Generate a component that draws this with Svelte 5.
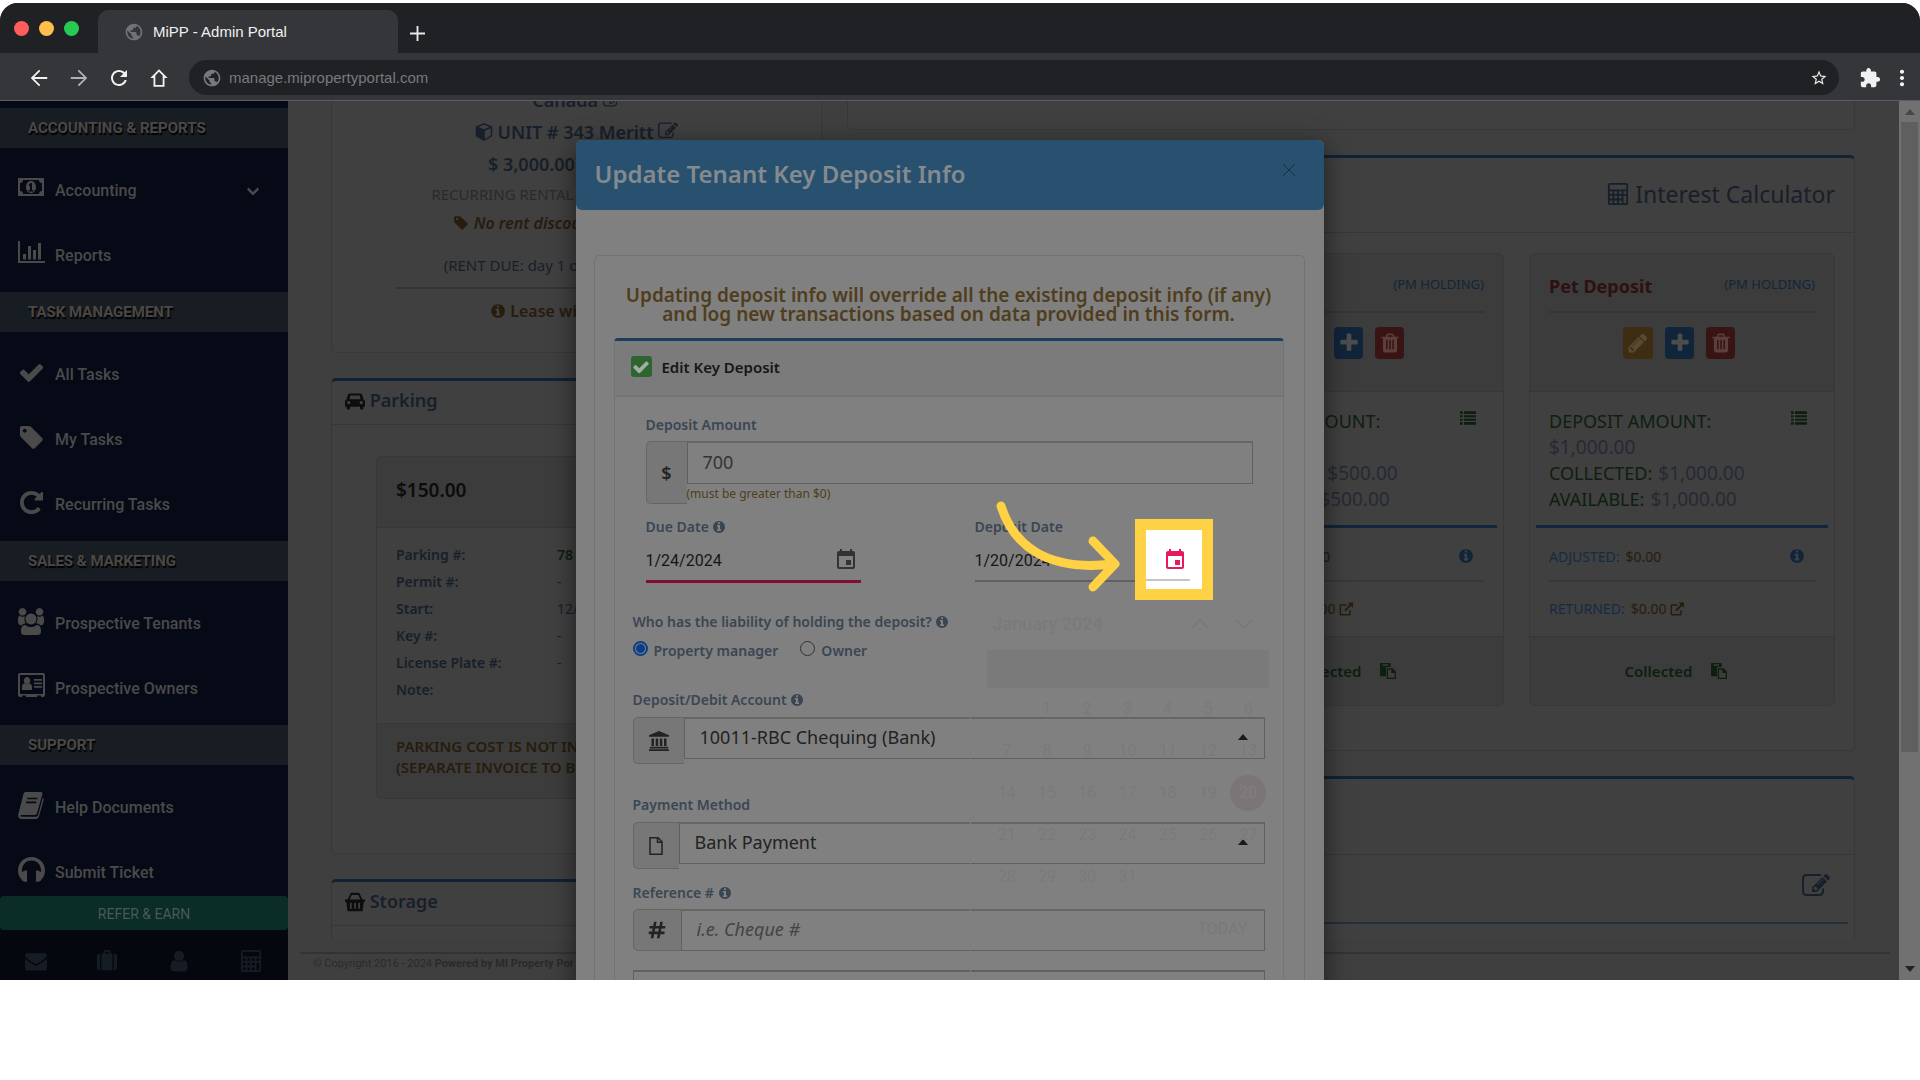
<script>
  const fa = {
    info: 'M1152 1376v-160q0-14-9-23t-23-9h-96v-512q0-14-9-23t-23-9h-320q-14 0-23 9t-9 23v160q0 14 9 23t23 9h96v320h-96q-14 0-23 9t-9 23v160q0 14 9 23t23 9h448q14 0 23-9t9-23zm-128-896v-160q0-14-9-23t-23-9h-192q-14 0-23 9t-9 23v160q0 14 9 23t23 9h192q14 0 23-9t9-23zm640 416q0 209-103 385.5t-279.5 279.5-385.5 103-385.5-103-279.5-279.5-103-385.5 103-385.5 279.5-279.5 385.5-103 385.5 103 279.5 279.5 103 385.5z',
    plus: 'M1600 736v192q0 40-28 68t-68 28h-416v416q0 40-28 68t-68 28h-192q-40 0-68-28t-28-68v-416h-416q-40 0-68-28t-28-68v-192q0-40 28-68t68-28h416v-416q0-40 28-68t68-28h192q40 0 68 28t28 68v416h416q40 0 68 28t28 68z',
    check: 'M1671 566q0 40-28 68l-724 724-136 136q-28 28-68 28t-68-28l-136-136-362-362q-28-28-28-68t28-68l136-136q28-28 68-28t68 28l294 295 656-657q28-28 68-28t68 28l136 136q28 28 28 68z',
    user: 'M1536 1399q0 109-62.5 187t-150.5 78h-854q-88 0-150.5-78t-62.5-187q0-85 8.5-160.5t31.5-152 58.5-131 94-89 134.5-34.5q131 128 313 128t313-128q76 0 134.5 34.5t94 89 58.5 131 31.5 152 8.5 160.5zm-256-887q0 159-112.5 271.5t-271.5 112.5-271.5-112.5-112.5-271.5 112.5-271.5 271.5-112.5 271.5 112.5 112.5 271.5z',
    repeat: 'M1664 256v448q0 26-19 45t-45 19h-448q-42 0-59-40-17-39 14-69l138-138q-148-137-349-137-104 0-198.5 40.5t-163.5 109.5-109.5 163.5-40.5 198.5 40.5 198.5 109.5 163.5 163.5 109.5 198.5 40.5q119 0 225-52t179-147q7-10 23-12 15 0 25 9l137 138q9 8 9.5 20.5t-7.5 22.5q-109 132-264 204.5t-327 72.5q-156 0-298-61t-245-164-164-245-61-298 61-298 164-245 245-164 298-61q147 0 284.5 55.5t244.5 156.5l130-129q29-31 70-14 39 17 39 59z',
    edit: 'M888 1184l116-116-152-152-116 116v56h96v96h56zm440-720q-16-16-33 1l-350 350q-17 17-1 33t33-1l350-350q17-17 1-33zm80 594v190q0 119-84.5 203.5t-203.5 84.5h-832q-119 0-203.5-84.5t-84.5-203.5v-832q0-119 84.5-203.5t203.5-84.5h832q63 0 117 25 15 7 18 23 3 17-9 29l-49 49q-14 14-32 8-23-6-45-6h-832q-66 0-113 47t-47 113v832q0 66 47 113t113 47h832q66 0 113-47t47-113v-126q0-13 9-22l64-64q15-15 35-7t20 29zm-96-738l288 288-672 672h-288v-288zm444 132l-92 92-288-288 92-92q28-28 68-28t68 28l152 152q28 28 28 68t-28 68z',
    mail: 'M1792 710v794q0 66-47 113t-113 47h-1472q-66 0-113-47t-47-113v-794q44 49 101 87 362 246 497 345 57 42 92.5 65.5t94.5 48 110 24.5h2q51 0 110-24.5t94.5-48 92.5-65.5q170-123 498-345 57-39 100-87zm0-294q0 79-49 151t-122 123q-376 261-468 325-10 7-42.5 31t-54 38.5-52 32.5-57.5 27-50 9h-2q-23 0-50-9t-57.5-27-52-32.5-54-38.5-42.5-31q-91-64-262-182.5t-205-142.5q-62-42-117-115.5t-55-136.5q0-78 41.5-130t118.5-52h1472q65 0 112.5 47t47.5 113z',
    tag: 'M576 448q0-53-37.5-90.5t-90.5-37.5-90.5 37.5-37.5 90.5 37.5 90.5 90.5 37.5 90.5-37.5 37.5-90.5zm1067 576q0 53-37 90l-491 492q-39 37-91 37-53 0-90-37l-715-716q-38-37-64.5-101t-26.5-117v-416q0-52 38-90t90-38h416q53 0 117 26.5t102 64.5l715 714q37 39 37 91z',
    trash: 'M704 1376v-704q0-14-9-23t-23-9h-64q-14 0-23 9t-9 23v704q0 14 9 23t23 9h64q14 0 23-9t9-23zm256 0v-704q0-14-9-23t-23-9h-64q-14 0-23 9t-9 23v704q0 14 9 23t23 9h64q14 0 23-9t9-23zm256 0v-704q0-14-9-23t-23-9h-64q-14 0-23 9t-9 23v704q0 14 9 23t23 9h64q14 0 23-9t9-23zm-544-992h448l-48-117q-7-9-17-11h-317q-10 2-17 11zm928 32v64q0 14-9 23t-23 9h-96v948q0 83-47 143.5t-113 60.5h-832q-66 0-113-58.5t-47-141.5v-952h-96q-14 0-23-9t-9-23v-64q0-14 9-23t23-9h309l70-167q15-37 54-63t79-26h320q40 0 79 26t54 63l70 167h309q14 0 23 9t9 23z',
    pencil: 'M491 1536l91-91-235-235-91 91v107h128v128h107zm523-928q0-22-22-22-10 0-17 7l-542 542q-7 7-7 17 0 22 22 22 10 0 17-7l542-542q7-7 7-17zm-54-192l416 416-832 832h-416v-416zm683 96q0 53-37 90l-166 166-416-416 166-165q36-38 90-38 53 0 91 38l235 234q37 39 37 91z'
  };
  const mi = {
    event: 'M17 12h-5v5h5v-5zM16 1v2H8V1H6v2H5c-1.11 0-1.99.9-1.99 2L3 19c0 1.1.89 2 2 2h14c1.1 0 2-.9 2-2V5c0-1.1-.9-2-2-2h-1V1h-2zm3 18H5V8h14v11z',
    puzzle: 'M20.5 11H19V7c0-1.1-.9-2-2-2h-4V3.5C13 2.12 11.88 1 10.5 1S8 2.12 8 3.5V5H4c-1.1 0-1.99.9-1.99 2v3.8H3.5c1.49 0 2.7 1.21 2.7 2.7s-1.21 2.7-2.7 2.7H2V20c0 1.1.9 2 2 2h3.8v-1.5c0-1.49 1.21-2.7 2.7-2.7 1.49 0 2.7 1.21 2.7 2.7V22H17c1.1 0 2-.9 2-2v-4h1.5c1.38 0 2.5-1.12 2.5-2.5S21.88 11 20.5 11z',
    reload: 'M17.65 6.35C16.2 4.9 14.21 4 12 4c-4.42 0-7.99 3.58-7.99 8s3.57 8 7.99 8c3.73 0 6.84-2.55 7.73-6h-2.08c-.82 2.33-3.04 4-5.65 4-3.31 0-6-2.69-6-6s2.69-6 6-6c1.66 0 3.14.69 4.22 1.78L13 11h7V4l-2.35 2.35z',
    back: 'M21 11H6.83l6.59-6.59L12 3l-9 9 9 9 1.41-1.41L6.83 13H21v-2z',
    forward: 'M3 11h14.17l-6.59-6.59L12 3l9 9-9 9-1.41-1.41L17.17 13H3v-2z',
    star: 'M22 9.24l-7.19-.62L12 2 9.19 8.63 2 9.24l5.46 4.73L5.82 21 12 17.27 18.18 21l-1.63-7.03L22 9.24zM12 15.4l-3.76 2.27 1-4.28-3.32-2.88 4.38-.38L12 6.1l1.71 4.04 4.38.38-3.32 2.88 1 4.28L12 15.4z',
    globe: 'M12 2C6.48 2 2 6.48 2 12s4.48 10 10 10 10-4.48 10-10S17.52 2 12 2zm-1 17.93c-3.95-.49-7-3.85-7-7.93 0-.62.08-1.21.21-1.79L9 15v1c0 1.1.9 2 2 2v1.93zm6.9-2.54c-.26-.81-1-1.39-1.9-1.39h-1v-3c0-.55-.45-1-1-1H8v-2h2c.55 0 1-.45 1-1V7h2c1.1 0 2-.9 2-2v-.41c2.93 1.19 5 4.06 5 7.41 0 2.08-.8 3.97-2.1 5.39z',
    home: 'M12 2.5L2.5 12H6v9.5h12V12h3.500L12 2.500zM12 5.300l4 4V19.500H8V9.300z',
    dots: 'M12 2a2.500 2.500 0 1 0 .01 0zM12 9.500a2.500 2.500 0 1 0 .01 0zM12 17a2.500 2.500 0 1 0 .01 0z',
    money: 'M0 3h26v18H0zM2 8v8a3 3 0 0 1 3 3h16a3 3 0 0 1 3-3V8a3 3 0 0 1-3-3H5a3 3 0 0 1-3 3zM13 6c3 0 5 2.700 5 6s-2 6-5 6-5-2.700-5-6 2-6 5-6zm-2 3.500v1.500h1v4h-1.500v1.500h5V15H14V8h-1.500z',
    chart: 'M0 1h2v20h25v2H0zM5 14h3v5.500H5zM10 6h3v13.500h-3zM15 10h3v9.500h-3zM20 3h3v16.500h-3z',
    group: 'M13 5.500a5.500 5.500 0 1 0 .01 0zM4.500 0a3.800 3.800 0 1 0 .01 0zM21.500 0a3.800 3.800 0 1 0 .01 0zM7 17c1.200 0 2 2 6 2s4.800-2 6-2c3 0 4 3 4 6 0 3-1 4-3.500 4h-13C4 27 3 26 3 23c0-3 1-6 4-6zM1.500 7.500C3 9 5 9 7 8.300c-1 3-.6 5 1 7-2 0-3.500 1-4.300 2C1 17.500 0 16 0 13c0-2 .2-5 1.500-5.500zM24.500 7.500C23 9 21 9 19 8.300c1 3 .6 5-1 7 2 0 3.500 1 4.300 2 2.700.2 3.700-1.300 3.700-4.300 0-2-.2-5-1.500-5.500z',
    idcard: 'M2 0h23a2 2 0 0 1 2 2v20a2 2 0 0 1-2 2h-2v-1.500h-4V24H8v-1.500H4V24H2a2 2 0 0 1-2-2V2a2 2 0 0 1 2-2zm0 2v19h23V2zM9 4a3.200 3.700 0 1 0 .01 0zM4 17v-2.500c0-2.500 1-4 2.500-4 1.500 1.500 3.500 1.500 5 0 1.500 0 2.500 1.500 2.500 4V17zM16 6h8v1.800h-8zM16 9.500h8v1.800h-8zM16 13h8v1.800h-8z',
    book: 'M7 0h13c1.500 0 2 1 1.600 2.300L17 18.500c-.5 1.500-1 2-2.500 2H3c-1 0-1 1.500 0 1.500h12.500c1.500 0 2-.5 2.500-2L22 5c1 .6 1 1.500.7 2.500L18.500 22c-.5 1.500-1.500 2-3 2H3c-2 0-3.500-2-2.700-4.500L4.500 3C5 1 5.500 0 7 0zm1.500 5-.4 1.500h9l.4-1.500zm-1 3.500L7 10h9l.5-1.500z',
    headset: 'M12 0c6.500 0 12 5 12 12 0 3-1 6-3 7.500-.5 2-2 2.500-5 2.500V12c2 0 3.500.5 4.500 1.500C21 7 17 3 12 3S3 7 3.500 13.500C4.500 12.500 6 12 8 12v10c-3 0-4.500-.5-5-2.500C1 18 0 15 0 12 0 5 5.500 0 12 0z',
    down: 'M3 5l9 9 9-9 3 4L12 21 0 9z',
    calc: 'M3 0h18a2 2 0 0 1 2 2v20a2 2 0 0 1-2 2H3a2 2 0 0 1-2-2V2a2 2 0 0 1 2-2zm0 2v5h18V2zM3 9v3h3V9zm5 0v3h3V9zm5 0v3h3V9zm5 0v3h3V9zM3 14v3h3v-3zm5 0v3h3v-3zm5 0v3h3v-3zm5 0v8h3v-8zM3 19v3h3v-3zm5 0v3h3v-3zm5 0v3h3v-3z',
    case: 'M8 4V2c0-1 1-2 2-2h4c1 0 2 1 2 2v2h2v18H6V4zm2-2v2h4V2zM1 7c0-2 1-3 3-3h.5v18H4c-2 0-3-1-3-3zM19.500 4h.5c2 0 3 1 3 3v12c0 2-1 3-3 3h-.5z',
    cube: 'M12 0l11 4.500v13L12 24 1 17.500v-13zM12 2.300L4.500 5.200 12 8.300l7.500-3.100zM13 10.200v11l8-4.700V7z',
    car: 'M6 3h12c2 0 2.500 1 3 3l1 4c1.300.5 2 1.500 2 3v6h-2v1.500a2 2 0 0 1-4 0V19H6v1.500a2 2 0 0 1-4 0V19H0v-6c0-1.500.7-2.500 2-3l1-4c.5-2 1-3 3-3zm.3 2.500L5.300 10h13.400l-1-4.500zM4.500 12a2 2 0 1 0 .01 0zM19.500 12a2 2 0 1 0 .01 0z',
    basket: 'M0 9h3l3-6c.5-1.500 1-2 2.500-2h7c1.500 0 2 .5 2.500 2l3 6h3v3h-1.500L21 23H3L1.500 12H0zm5.500 0h13L16 3.500H8zM6 13v7h2v-7zm5 0v7h2v-7zm5 0v7h2v-7z',
    list: 'M0 2h4v4H0zM6 2h18v4H6zM0 8h4v3H0zM6 8h18v3H6zM0 13h4v3H0zM6 13h18v3H6zM0 18h4v4H0zM6 18h18v4H6z',
    external: 'M3 4h10v2.500H3.500V20.500H17.500V14H20v7a2 2 0 0 1-2 2H3a2 2 0 0 1-2-2V6a2 2 0 0 1 2-2zM15 1h9v9l-3.300-3.300L11.500 16 9 13.500l9.300-9.200z',
    paste: 'M1 0h14a1 1 0 0 1 1 1v5h-5a2 2 0 0 0-2 2v12H1a1 1 0 0 1-1-1V1a1 1 0 0 1 1-1zm3 2v2h8V2zM11 8h8l5 5v10a1 1 0 0 1-1 1H11a1 1 0 0 1-1-1V9a1 1 0 0 1 1-1zm1 2v12h10v-7h-5v-5z',
    bank: 'M12 0l12 5v2H0V5zM3 9h3v9H3zM8 9h3v9H8zM13 9h3v9h-3zM18 9h3v9h-3zM1 19h22v2H1zM0 22h24v2H0z',
    file: 'M4 0h11l6 6v18H3V0zm1 2v20h14V8h-6V2zm10 .800V6h3.200z',
    hash: 'M8 1h3.500L10.400 6.500h4.800L16.300 1h3.500l-1.100 5.500H23V10h-5l-.8 4H22v3.500h-5.500L15.400 23h-3.500l1.100-5.500H8.200L7.100 23H3.600l1.100-5.500H1V14h4.400l.8-4H2V6.500h4.900zM9.700 10l-.8 4h4.800l.8-4z'
  };
  const nav = [
    { head: 'ACCOUNTING & REPORTS', items: [['money', 'Accounting'], ['chart', 'Reports']] },
    { head: 'TASK MANAGEMENT', items: [['check', 'All Tasks'], ['tag', 'My Tasks'], ['repeat', 'Recurring Tasks']] },
    { head: 'SALES & MARKETING', items: [['group', 'Prospective Tenants'], ['idcard', 'Prospective Owners']] },
    { head: 'SUPPORT', items: [['book', 'Help Documents'], ['headset', 'Submit Ticket']] }
  ];
  const parking = [['Parking #:', '78'], ['Permit #:', '-'], ['Start:', '12/'], ['Key #:', '-'], ['License Plate #:', '-'], ['Note:', '']];
  const cards = [
    { title: 'Key Deposit', amount: '$500.00', ok: true },
    { title: 'Pet Deposit', amount: '$1,000.00', ok: false }
  ];
  const days = [null, ...Array.from({ length: 31 }, (_, i) => i + 1)];
  let holder = $state('pm');
</script>

{#snippet ic(name, cls = '')}
  {#if fa[name]}
    <svg class="ic {cls}" viewBox="0 0 1792 1792" aria-hidden="true"><path d={fa[name]} /></svg>
  {:else}
    <svg class="ic {cls}" viewBox={['money', 'chart', 'group', 'idcard'].includes(name) ? '0 0 27 27' : '0 0 24 24'} aria-hidden="true"><path fill-rule="evenodd" d={mi[name]} /></svg>
  {/if}
{/snippet}

<div class="page">
  <div class="window">
    <div class="tabs">
      <div class="lights"><i class="r"></i><i class="y"></i><i class="g"></i></div>
      <div class="tab">{@render ic('globe', 's20')}<span>MiPP - Admin Portal</span></div>
      <button class="newtab" aria-label="New tab"><svg viewBox="0 0 16 16"><path d="M7 0h2v7h7v2H9v7H7V9H0V7h7z" /></svg></button>
    </div>
    <div class="toolbar">
      <button aria-label="Back">{@render ic('back', 's22')}</button>
      <button aria-label="Forward" class="dim">{@render ic('forward', 's22')}</button>
      <button aria-label="Reload">{@render ic('reload', 's24')}</button>
      <button aria-label="Home">{@render ic('home', 's22')}</button>
      <div class="url">{@render ic('globe', 's20')}<span>manage.mipropertyportal.com</span>{@render ic('star', 's18 star')}</div>
      <button aria-label="Extensions" class="ext">{@render ic('puzzle', 's22')}</button>
      <button aria-label="Menu" class="menu">{@render ic('dots', 's20')}</button>
    </div>

    <div class="view">
      <aside>
        <nav>
          {#each nav as g}
            <h6>{g.head}</h6>
            <ul>
              {#each g.items as [icon, label]}
                <li><a href="#{icon}">{@render ic(icon, 'navic')}<span>{label}</span>{#if icon === 'money'}{@render ic('down', 's12')}{/if}</a></li>
              {/each}
            </ul>
          {/each}
        </nav>
        <button class="refer">REFER &amp; EARN</button>
        <div class="sidefoot">
          {@render ic('mail', 's22')}{@render ic('case', 's22')}{@render ic('user', 's24')}{@render ic('calc', 's22')}
        </div>
      </aside>

      <main>
        <div class="columns">
          <div class="left">
            <section class="panel lease">
              <p class="l1">Canada {@render ic('edit', 's18')}</p>
              <p class="l1">{@render ic('cube', 's18')} UNIT # 343 Meritt {@render ic('edit', 's20')}</p>
              <p class="l1">$ 3,000.00 / monthly</p>
              <p class="l2">RECURRING RENTAL INCOME (MONTHLY)</p>
              <p class="l3">{@render ic('tag', 's16')} No rent discount available yet.</p>
              <p class="l4">(RENT DUE: day 1 of each new month)</p>
              <hr />
              <p class="l5">{@render ic('info', 's16')} Lease will expire on</p>
            </section>
            <section class="panel blue parking">
              <h3>{@render ic('car', 's20')} Parking</h3>
              <div class="pcard">
                <h4>$150.00</h4>
                <dl>
                  {#each parking as [k, v], i}<dt>{k}</dt><dd class:green={i === 0}>{v}</dd>{/each}
                </dl>
                <p>PARKING COST IS NOT INCLUDED<br />(SEPARATE INVOICE TO BE</p>
              </div>
            </section>
            <section class="panel blue storage">
              <h3>{@render ic('basket', 's20')} Storage</h3>
            </section>
          </div>

          <div class="right">
            <section class="panel stub"></section>
            <section class="panel blue deposits">
              <h2>{@render ic('calc', 's22')} Interest Calculator</h2>
              <div class="cards">
                <article></article>
                {#each cards as c}
                  <article>
                    <header>
                      <div class="ttl"><b class:ok={c.ok}>{c.title}</b><span>(PM HOLDING)</span></div>
                      <div class="btns">
                        <button class="o" aria-label="Edit">{@render ic('pencil', 's22')}</button>
                        <button class="b" aria-label="Add">{@render ic('plus', 's22')}</button>
                        <button class="d" aria-label="Delete">{@render ic('trash', 's22')}</button>
                      </div>
                    </header>
                    <div class="amts">
                      <p><em>DEPOSIT AMOUNT:</em>{@render ic('list', 's16')}</p>
                      <p>{c.amount}</p>
                      <p><em>COLLECTED:</em> {c.amount}</p>
                      <p><em>AVAILABLE:</em> {c.amount}</p>
                    </div>
                    <div class="adj">
                      <p>ADJUSTED: <i>$0.00</i>{@render ic('info', 's16')}</p>
                      <p>RETURNED: <i>$0.00 {@render ic('external', 's14')}</i></p>
                    </div>
                    <footer><span>Collected</span>{@render ic('paste', 's16')}</footer>
                  </article>
                {/each}
              </div>
            </section>
            <section class="panel blue extra">
              <div class="bar"></div>
              <div class="body">{@render ic('edit', 's28')}</div>
            </section>
          </div>
        </div>
        <footer class="copy">© Copyright 2016 - 2024 <b>Powered by MI Property Por</b></footer>
      </main>
      <div class="scroll"><span class="up"></span><span class="thumb"></span><span class="dn"></span></div>

      <div class="layer">
        <div class="modal" role="dialog" aria-label="Update Tenant Key Deposit Info">
          <header><h1>Update Tenant Key Deposit Info</h1><button aria-label="Close"><svg viewBox="0 0 12 12"><path d="M0 0l12 12M12 0L0 12" /></svg></button></header>
          <div class="outer">
            <p class="warn">Updating deposit info will override all the existing deposit info (if any)<br />and log new transactions based on data provided in this form.</p>
            <form class="inner">
              <label class="edit"><span class="tick"><input type="checkbox" checked />{@render ic('check', 's18')}</span>Edit Key Deposit</label>
              <div class="fields">
                <div class="inset">
                  <label class="lb" for="amt">Deposit Amount</label>
                  <div class="grp amt">
                    <span class="add">$</span>
                    <div class="grow"><input id="amt" value="700" /><small>(must be greater than $0)</small></div>
                  </div>
                  <div class="dates">
                    <div class="date on">
                      <label class="lb" for="due">Due Date {@render ic('info', 's14')}</label>
                      <div class="dl"><input id="due" value="1/24/2024" /><button type="button" aria-label="Pick due date">{@render ic('event', 's24')}</button></div>
                    </div>
                    <div class="date">
                      <label class="lb" for="dep">Deposit Date</label>
                      <div class="dl"><input id="dep" value="1/20/2024" /></div>
                      <div class="focus"><button type="button" aria-label="Pick deposit date">{@render ic('event', 's24')}</button><span></span></div>
                      <svg class="arrow" viewBox="0 0 126 94" aria-hidden="true"><path d="M6 8C18 46 50 74 118 66M98 43l22 23-22 23" /></svg>
                      <div class="cal" aria-hidden="true">
                        <div class="mon"><span>January 2024</span><svg viewBox="0 0 62 10"><path d="M1 9l8-8 8 8M45 1l8 8 8-8" /></svg></div>
                        <div class="wk"></div>
                        <div class="days">{#each days as d}<span class:sel={d === 20}>{d ?? ''}</span>{/each}</div>
                        <div class="today">TODAY</div>
                      </div>
                    </div>
                  </div>
                </div>
                <fieldset>
                  <legend class="lb">Who has the liability of holding the deposit? {@render ic('info', 's14')}</legend>
                  <div class="opts">
                    <label><input type="radio" name="h" value="pm" bind:group={holder} />Property manager</label>
                    <label><input type="radio" name="h" value="ow" bind:group={holder} />Owner</label>
                  </div>
                </fieldset>
                <label class="lb" for="acc">Deposit/Debit Account {@render ic('info', 's14')}</label>
                <div class="grp acc">
                  <span class="add">{@render ic('bank', 's20')}</span>
                  <div class="grow pick"><select id="acc"><option>10011-RBC Chequing (Bank)</option></select><i class="tri"></i></div>
                </div>
                <label class="lb lpay" for="pay">Payment Method</label>
                <div class="grp pay">
                  <span class="add">{@render ic('file', 's18')}</span>
                  <div class="grow pick"><select id="pay"><option>Bank Payment</option></select><i class="tri"></i></div>
                </div>
                <label class="lb lref" for="ref">Reference # {@render ic('info', 's14')}</label>
                <div class="grp ref">
                  <span class="add">{@render ic('hash', 's18')}</span>
                  <div class="grow"><input id="ref" placeholder="i.e. Cheque #" /></div>
                </div>
                <textarea aria-label="Notes"></textarea>
              </div>
            </form>
          </div>
        </div>
      </div>
    </div>
  </div>
</div>

<style>
  :global(body) { margin: 0; background: #fff; }
  .page, .page :global(*) { box-sizing: border-box; }
  .page { height: 100vh; padding: 3px 0 100px; display: flex; font-family: 'Noto Sans', 'Open Sans', sans-serif; overflow: hidden; }
  .window { flex: 1; min-width: 0; display: flex; flex-direction: column; border-radius: 18px 18px 0 0; overflow: hidden; background: #404040; }
  p, h1, h2, h3, h4, h6, ul, dl, dd, fieldset, legend { margin: 0; padding: 0; }
  button { font: inherit; border: 0; padding: 0; background: none; color: inherit; display: inline-flex; align-items: center; justify-content: center; }
  .ic { fill: currentColor; flex: none; width: 16px; height: 16px; vertical-align: -2px; }
  .s12 { width: 12px; height: 12px; }
  .s14 { width: 14px; height: 14px; }
  .s16 { width: 16px; height: 16px; }
  .s18 { width: 18px; height: 18px; }
  .s20 { width: 20px; height: 20px; }
  .s22 { width: 22px; height: 22px; }
  .s24 { width: 24px; height: 24px; }
  .s28 { width: 28px; height: 28px; }

  .tabs { height: 50px; flex: none; background: #202124; display: flex; align-items: flex-end; font-family: 'Liberation Sans', Arial, sans-serif; }
  .lights { width: 98px; height: 50px; padding-left: 14px; display: flex; gap: 10px; align-items: center; }
  .lights i { width: 15px; height: 15px; border-radius: 50%; }
  .r { background: #ff5c5c; }
  .y { background: #ffbd4c; }
  .g { background: #28ca56; }
  .tab { width: 300px; height: 43px; background: #35363a; border-radius: 10px 10px 0 0; display: flex; align-items: center; gap: 9px; padding-left: 26px; color: #6f7276; }
  .tab span { color: #f1f1f1; font-size: 15px; }
  .newtab { width: 38px; height: 40px; }
  .newtab svg { width: 15px; height: 15px; fill: #e8e8e8; }
  .toolbar { height: 48px; flex: none; background: #35363a; border-bottom: 1px solid #5c5d60; display: flex; align-items: center; color: #f1f1f1; padding: 2px 6px 0 19px; }
  .toolbar button { width: 40px; height: 32px; }
  .toolbar .dim { color: #b0b1b4; }
  .url { flex: 1; margin-left: 10px; height: 35px; border-radius: 18px; background: #202124; display: flex; align-items: center; padding: 0 11px 0 13px; gap: 7px; color: #77797d; font: 15px 'Liberation Sans', Arial, sans-serif; }
  .url span { flex: 1; }
  .url :global(.star) { color: #e8e8e8; }
  .toolbar .ext { width: 40px; margin-left: 11px; }
  .toolbar .menu { width: 24px; }

  .view { flex: 1; min-height: 0; display: flex; position: relative; overflow: hidden; }
  aside { width: 288px; flex: none; background: #060a16; display: flex; flex-direction: column; color: #4a4a4a; font-family: Roboto, sans-serif; }
  nav { flex: 1; min-height: 0; overflow: hidden; padding-top: 7px; }
  h6 { height: 40px; line-height: 40px; padding-left: 28px; background: #181d23; font-size: 15px; font-weight: 700; color: #4a4845; text-shadow: 1px 2px 1px #000; }
  ul { list-style: none; padding: 10px 0 4px; }
  li a { height: 65px; display: flex; align-items: center; padding: 0 29px 0 18px; gap: 10px; color: inherit; text-decoration: none; font-size: 16px; font-weight: 500; }
  li span { flex: 1; }
  li :global(.navic) { width: 27px; height: 27px; margin-bottom: 5px; }
  .refer { height: 34px; padding-top: 2px; background: #0b2d27; color: #4a5a55; border-radius: 4px; font-size: 14px; flex: none; }
  .sidefoot { height: 50px; flex: none; background: #04080e; display: flex; justify-content: space-between; align-items: center; padding: 12px 26px 0 25px; color: #161c24; }

  main { flex: 1; min-width: 0; display: flex; flex-direction: column; background: #3f3f3f; color: #171f2a; }
  .columns { flex: 1; min-height: 0; overflow: hidden; display: flex; gap: 25px; padding: 0 44px 0 43px; }
  .left { width: 491px; flex: none; }
  .right { flex: 1; min-width: 0; }
  .panel { border: 1px solid #383838; border-radius: 5px; background: #404040; }
  .blue { border-top: 3px solid #0f2335; margin-top: 25px; }
  .lease { margin-top: -18px; height: 270px; text-align: center; white-space: nowrap; padding: 0 64px; }
  .l1 { font-size: 18px; font-weight: 600; line-height: 32px; }
  .l2 { font-size: 15px; line-height: 28px; color: #2a2a2a; }
  .l3 { font-size: 16px; font-weight: 600; font-style: italic; line-height: 30px; color: #271c0d; }
  .l4 { font-size: 15px; line-height: 30px; margin-top: 12px; }
  .lease hr { border: 0; border-top: 2px solid #353535; margin: 7px 0 0; }
  .l5 { font-size: 16px; font-weight: 600; line-height: 44px; color: #271c0d; }
  h3 { font-size: 18px; font-weight: 600; height: 44px; line-height: 38px; padding-left: 13px; border-bottom: 1px solid #373737; }
  h3 :global(.ic) { color: #0c0d0f; vertical-align: -4px; }
  .parking { height: 476px; }
  .pcard { margin: 31px 44px 0; border: 1px solid #373737; border-radius: 6px; background: #3c3c3c; overflow: hidden; white-space: nowrap; }
  h4 { height: 71px; line-height: 66px; padding-left: 19px; font-size: 19px; font-weight: 600; color: #0c0c0c; border-bottom: 1px solid #373737; }
  dl { display: grid; grid-template-columns: 161px 1fr; padding: 13px 0 20px 19px; background: #404040; border-bottom: 1px solid #373737; font-size: 14px; line-height: 27px; }
  dt { font-weight: 600; }
  dd.green { color: #0d1f0f; font-weight: 600; }
  .pcard p { padding: 12px 19px 20px; font-size: 15px; font-weight: 600; line-height: 21px; color: #271c0d; }
  .storage { height: 200px; }

  .stub { height: 29px; border-top: 0; border-radius: 0 0 5px 5px; }
  .deposits { height: 596px; }
  h2 { font-size: 23px; font-weight: 400; text-align: right; height: 75px; line-height: 72px; padding-right: 19px; border-bottom: 1px solid #373737; }
  .cards { display: grid; grid-template-columns: repeat(3, 1fr); gap: 25px; padding: 20px 19px 0; }
  article { border: 1px solid #383838; border-radius: 6px; background: #3c3c3c; overflow: hidden; white-space: nowrap; }
  article header { padding: 0 19px; height: 138px; border-bottom: 1px solid #373737; }
  .ttl { display: flex; justify-content: space-between; line-height: 65px; height: 59px; border-bottom: 2px solid #353535; }
  .ttl b { font-size: 18px; color: #2e1010; }
  .ttl .ok { color: #0d1f0f; }
  .ttl span { font-size: 13px; line-height: 61px; color: #10263a; }
  .btns { display: flex; justify-content: center; gap: 12px; padding: 14px 6px 0 0; }
  .btns button { width: 29px; height: 32px; border-radius: 4px; color: #4d4d4d; }
  .btns .o { width: 30px; background: #3f2d13; }
  .b { background: #10243a; }
  .d { background: #391414; }
  .o :global(.ic) { color: #5a4a32; }
  .d :global(.ic) { color: #5c3e3a; }
  .amts { background: #404040; padding: 16px 19px 13px; font-size: 19px; line-height: 26px; color: #262a34; }
  .amts p { display: flex; gap: 6px; }
  .amts em { font-style: normal; font-size: 18px; color: #0d1f0f; }
  .amts p :global(.ic) { margin: 2px 8px 0 auto; color: #0d1f0f; }
  .adj { background: #404040; color: #132c44; font-size: 14px; border-bottom: 1px solid #373737; }
  .adj::before { content: ''; display: block; height: 3px; margin: 0 6px; background: #10263a; }
  .adj p { margin: 0 19px; padding-top: 4px; height: 54px; display: flex; align-items: center; gap: 6px; border-bottom: 2px solid #383838; }
  .adj p + p { border: 0; padding: 0 0 2px; }
  .adj i { font-style: normal; color: #271c0d; }
  .adj p > :global(.ic) { margin: 0 10px 0 auto; color: #10243a; }
  article footer { height: 68px; display: flex; align-items: center; justify-content: center; gap: 19px; padding-right: 12px; color: #0d1f0f; font-size: 15px; font-weight: 600; }
  .extra { height: 240px; }
  .bar { height: 76px; border-bottom: 1px solid #373737; }
  .extra .body { height: 69px; margin: 0 6px; padding: 17px 18px 0; text-align: right; border-bottom: 2px solid #232f3b; }
  .copy { margin: 12px 9px 0 12px; height: 28px; border-top: 2px solid #333; padding-left: 13px; font: 11px/20px Roboto, sans-serif; color: #2a2a2a; }

  .scroll { width: 21px; flex: none; background: #717171; display: flex; flex-direction: column; align-items: center; padding: 8px 0; }
  .up { border: 5px solid transparent; border-top: 0; border-bottom: 6px solid #474747; }
  .thumb { flex: none; width: 17px; height: 73%; margin-top: 7px; background: #5f5f5f; }
  .dn { margin-top: auto; border: 5px solid transparent; border-bottom: 0; border-top: 6px solid #222; }

  .layer { position: absolute; inset: 0 21px 0 0; display: flex; justify-content: center; align-items: flex-start; padding-top: 39px; overflow: hidden; }
  .modal { width: 748px; height: 1100px; background: #808080; border-radius: 6px; box-shadow: 0 6px 26px rgba(0, 0, 0, .55); color: #3a4654; }
  .modal > header { height: 70px; background: #27516f; border-radius: 6px; display: flex; justify-content: space-between; padding: 0 28px 0 19px; }
  h1 { font-size: 24px; line-height: 68px; font-weight: 600; color: #858a8e; }
  .modal > header button { height: 60px; width: 14px; }
  .modal > header svg { width: 12px; height: 12px; stroke: #173044; stroke-width: 1; overflow: visible; }
  .outer { margin: 45px 19px 0 18px; height: 900px; border: 1px solid #727272; border-radius: 5px; padding: 30px 20px 0 19px; }
  .warn { text-align: center; font-size: 19px; font-weight: 600; line-height: 19px; color: #4f3d1c; white-space: nowrap; padding-bottom: 14px; }
  .inner { border: 1px solid #747474; border-top: 3px solid #1d3e5a; border-radius: 4px; height: 800px; }
  .edit { display: flex; align-items: center; gap: 10px; height: 56px; padding: 0 0 3px 16px; background: #7b7b7b; border-bottom: 2px solid #757575; font-size: 15px; font-weight: 600; color: #161616; }
  .tick { display: grid; place-items: center; }
  .tick > :global(*) { grid-area: 1 / 1; }
  .tick input { appearance: none; margin: 0; width: 21px; height: 21px; border-radius: 3px; background: #2f6430; }
  .tick :global(.ic) { color: #a0b0a0; }
  .fields { padding: 0 18px; }
  .inset { padding: 0 12px 0 13px; }
  .lb { display: block; font-size: 14px; font-weight: 600; line-height: 20px; white-space: nowrap; }
  .inset > .lb { padding-top: 18px; }
  .grp { display: flex; }
  .add { flex: none; width: 51px; background: #777; border: 1px solid #656565; border-right: 0; border-radius: 5px 0 0 5px; display: flex; align-items: center; justify-content: center; color: #222; }
  .grow { flex: 1; min-width: 0; }
  .grow input, .grow select { display: block; width: 100%; height: 42px; border: 1px solid #606060; border-top: 2px solid #666; border-radius: 0; background: #808080; padding: 0 16px 3px 15px; font: 18px 'Noto Sans', sans-serif; color: #222; appearance: none; }
  .grow input::placeholder { color: #444; font-style: italic; opacity: 1; }
  .amt { margin-top: 6px; }
  .amt .add { width: 41px; font-size: 18px; font-weight: 600; }
  .amt #amt { color: #333; height: 43px; }
  .amt small { display: block; font-size: 12px; line-height: 20px; color: #4f3d1c; }
  .dates { display: flex; gap: 114px; margin-top: 13px; }
  .date { width: 215px; position: relative; }
  .dl { display: flex; height: 45px; align-items: center; border-bottom: 2px solid #606060; padding: 3px 3px 0 0; }
  .on .dl { border-bottom: 3px solid #800f38; height: 46px; }
  .dl input { flex: 1; min-width: 0; border: 0; background: none; padding: 0; font: 16px Roboto, sans-serif; color: #161616; }
  .dl button { color: #333; }
  .focus { position: absolute; left: 160px; top: 2px; width: 78px; height: 81px; border: 11px solid #ffd145; background: #fff; z-index: 2; }
  .focus button { position: absolute; left: 17px; top: 18px; color: #e8185c; }
  .focus span { position: absolute; left: 0; bottom: 8px; width: 44px; height: 2px; background: #c6c6c6; }
  .arrow { position: absolute; left: 20px; top: -19px; width: 126px; height: 94px; fill: none; stroke: #ffd145; stroke-width: 9; stroke-linecap: round; stroke-linejoin: round; z-index: 2; }
  .cal { position: absolute; left: -5px; top: 70px; width: 311px; height: 390px; z-index: 1; color: #7a7a7a; font-family: Roboto, sans-serif; pointer-events: none; padding: 0 12px 0 16px; border-left: 1px solid #7e7e7e; }
  .mon { height: 63px; display: flex; align-items: center; justify-content: space-between; padding: 10px 16px 0 6px; font-size: 18px; font-weight: 500; }
  .mon svg { width: 62px; height: 10px; fill: none; stroke: #787878; stroke-width: 2; }
  .wk { height: 38px; background: #7a7a7a; }
  .days { display: grid; grid-template-columns: repeat(7, 1fr); grid-auto-rows: 42px; place-items: center; font-size: 16px; }
  .days span { width: 36px; height: 36px; line-height: 36px; text-align: center; }
  .days .sel { background: #7c7577; border-radius: 50%; color: #847d7f; }
  .today { text-align: right; padding: 21px 21px 0 0; font-size: 16px; color: #7e7779; }
  fieldset { border: 0; margin-top: 29px; height: 56px; font-size: 14px; font-weight: 600; }
  .opts { display: flex; gap: 22px; padding-top: 5px; }
  .opts label { display: flex; gap: 6px; align-items: flex-start; line-height: 28px; }
  .opts input { appearance: none; margin: 4px 0 0; width: 15px; height: 15px; border: 1px solid #333; border-radius: 50%; }
  .opts input:checked { border: 2px solid #0a3f86; background: radial-gradient(#0a3f86 0 4px, #808080 5px); }
  .fields > .lb { padding-top: 22px; }
  .fields > .lpay { padding-top: 31px; }
  .fields > .lref { padding-top: 14px; }
  .pick { position: relative; }
  .tri { position: absolute; right: 17px; top: 17px; border: 5px solid transparent; border-top: 0; border-bottom: 6px solid #1a1a1a; }
  .acc, .pay { height: 47px; margin-top: 7px; }
  .pay .add { width: 46px; }
  .ref { margin-top: 6px; }
  .ref .add { width: 48px; }
  textarea { display: block; width: 100%; height: 80px; margin-top: 19px; background: #808080; border: 1px solid #606060; border-top-width: 2px; resize: none; }
</style>
